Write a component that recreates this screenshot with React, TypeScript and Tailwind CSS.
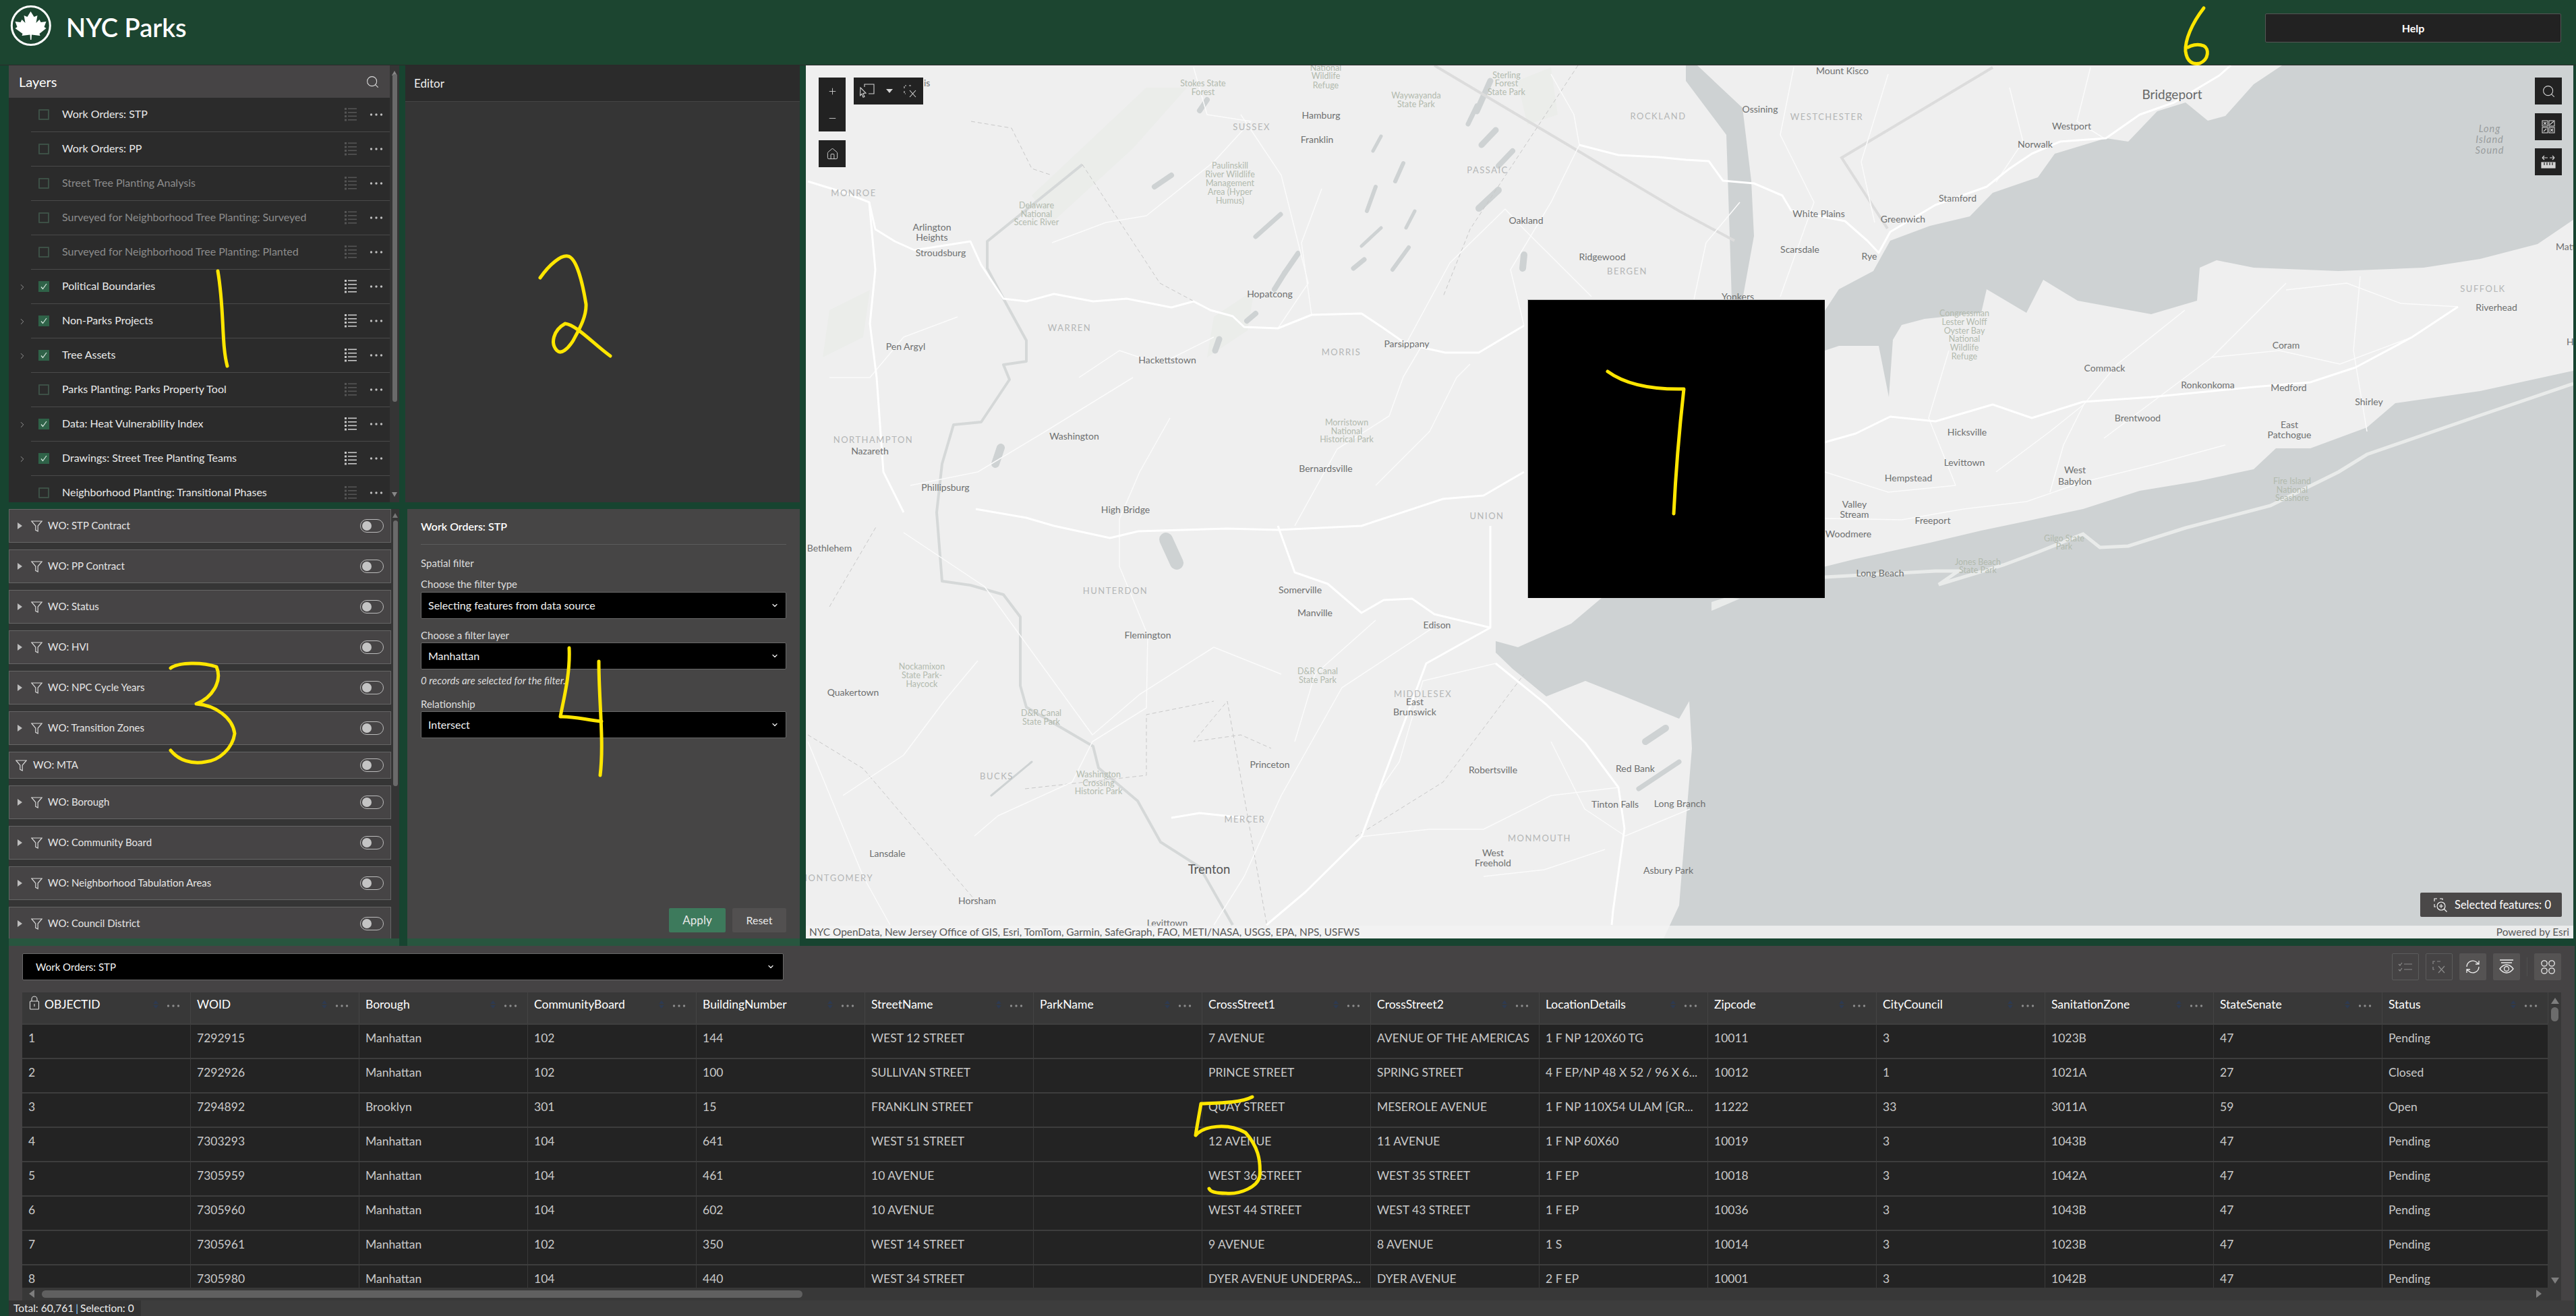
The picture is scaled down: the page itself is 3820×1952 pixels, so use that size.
import { ChevronDown, ChevronRight, Search, Home, Plus, Minus } from "lucide-react";

const sans = "font-[family-name:Lato,sans-serif]";

const layers = [
  { label: "Work Orders: STP", on: false, dim: false, open: false },
  { label: "Work Orders: PP", on: false, dim: false, open: false },
  { label: "Street Tree Planting Analysis", on: false, dim: true, open: false },
  { label: "Surveyed for Neighborhood Tree Planting: Surveyed", on: false, dim: true, open: false },
  { label: "Surveyed for Neighborhood Tree Planting: Planted", on: false, dim: true, open: false },
  { label: "Political Boundaries", on: true, dim: false, open: true },
  { label: "Non-Parks Projects", on: true, dim: false, open: true },
  { label: "Tree Assets", on: true, dim: false, open: true },
  { label: "Parks Planting: Parks Property Tool", on: false, dim: false, open: false },
  { label: "Data: Heat Vulnerability Index", on: true, dim: false, open: true },
  { label: "Drawings: Street Tree Planting Teams", on: true, dim: false, open: true },
  { label: "Neighborhood Planting: Transitional Phases", on: false, dim: false, open: false },
];

const filters = [
  "WO: STP Contract",
  "WO: PP Contract",
  "WO: Status",
  "WO: HVI",
  "WO: NPC Cycle Years",
  "WO: Transition Zones",
  "WO: MTA",
  "WO: Borough",
  "WO: Community Board",
  "WO: Neighborhood Tabulation Areas",
  "WO: Council District",
];

const columns = [
  "OBJECTID", "WOID", "Borough", "CommunityBoard", "BuildingNumber", "StreetName", "ParkName", "CrossStreet1",
  "CrossStreet2", "LocationDetails", "Zipcode", "CityCouncil", "SanitationZone", "StateSenate", "Status",
];

const rows = [
  ["1", "7292915", "Manhattan", "102", "144", "WEST 12 STREET", "", "7 AVENUE", "AVENUE OF THE AMERICAS", "1 F NP 120X60 TG", "10011", "3", "1023B", "47", "Pending"],
  ["2", "7292926", "Manhattan", "102", "100", "SULLIVAN STREET", "", "PRINCE STREET", "SPRING STREET", "4 F EP/NP 48 X 52 / 96 X 6...", "10012", "1", "1021A", "27", "Closed"],
  ["3", "7294892", "Brooklyn", "301", "15", "FRANKLIN STREET", "", "QUAY STREET", "MESEROLE AVENUE", "1 F NP 110X54 ULAM [GR...", "11222", "33", "3011A", "59", "Open"],
  ["4", "7303293", "Manhattan", "104", "641", "WEST 51 STREET", "", "12 AVENUE", "11 AVENUE", "1 F NP 60X60", "10019", "3", "1043B", "47", "Pending"],
  ["5", "7305959", "Manhattan", "104", "461", "10 AVENUE", "", "WEST 36 STREET", "WEST 35 STREET", "1 F EP", "10018", "3", "1042A", "47", "Pending"],
  ["6", "7305960", "Manhattan", "104", "602", "10 AVENUE", "", "WEST 44 STREET", "WEST 43 STREET", "1 F EP", "10036", "3", "1043B", "47", "Pending"],
  ["7", "7305961", "Manhattan", "102", "350", "WEST 14 STREET", "", "9 AVENUE", "8 AVENUE", "1 S", "10014", "3", "1023B", "47", "Pending"],
  ["8", "7305980", "Manhattan", "104", "440", "WEST 34 STREET", "", "DYER AVENUE UNDERPAS...", "DYER AVENUE", "2 F EP", "10001", "3", "1042B", "47", "Pending"],
];

// map labels, in page pixels
const cities: [string, number, number][] = [
  ["Hamburg", 1959, 171], ["Franklin", 1953, 207], ["Arlington", 1382, 337], ["Heights", 1382, 352], ["Stroudsburg", 1395, 375],
  ["Oakland", 2263, 327], ["Ridgewood", 2376, 381], ["Hopatcong", 1883, 436], ["Parsippany", 2086, 510], ["Pen Argyl", 1343, 514],
  ["Hackettstown", 1731, 534], ["Washington", 1593, 647], ["Nazareth", 1290, 669], ["Bernardsville", 1966, 695], ["Phillipsburg", 1402, 723],
  ["High Bridge", 1669, 756], ["Bethlehem", 1230, 813], ["Somerville", 1928, 875], ["Manville", 1950, 909], ["Edison", 2131, 927],
  ["Flemington", 1702, 942], ["Quakertown", 1265, 1027], ["East", 2098, 1041], ["Brunswick", 2098, 1056], ["Princeton", 1883, 1134],
  ["Robertsville", 2214, 1142], ["Red Bank", 2425, 1140], ["Tinton Falls", 2395, 1193], ["Long Branch", 2491, 1192], ["West", 2214, 1265],
  ["Freehold", 2214, 1280], ["Lansdale", 1316, 1266], ["Asbury Park", 2474, 1291], ["Horsham", 1449, 1336], ["Levittown", 1731, 1369],
  ["Mount Kisco", 2732, 105], ["Ossining", 2610, 162], ["Westport", 3072, 187], ["Norwalk", 3018, 214], ["Stamford", 2903, 294],
  ["White Plains", 2697, 317], ["Greenwich", 2822, 325], ["Scarsdale", 2669, 370], ["Rye", 2772, 380], ["Yonkers", 2577, 440],
  ["Riverhead", 3702, 456], ["Coram", 3390, 512], ["Commack", 3121, 546], ["Ronkonkoma", 3274, 571], ["Medford", 3394, 575],
  ["Shirley", 3513, 596], ["Brentwood", 3170, 620], ["East", 3395, 630], ["Patchogue", 3395, 645], ["Hicksville", 2917, 641],
  ["Levittown", 2913, 686], ["West", 3077, 697], ["Babylon", 3077, 714], ["Hempstead", 2830, 709], ["Valley", 2750, 748],
  ["Stream", 2750, 763], ["Freeport", 2866, 772], ["Woodmere", 2741, 792], ["Long Beach", 2788, 850],
];

const counties: [string, number, number][] = [
  ["SUSSEX", 1856, 188], ["ROCKLAND", 2459, 172], ["PASSAIC", 2206, 252], ["MONROE", 1266, 286], ["BERGEN", 2413, 402], ["WARREN", 1586, 486],
  ["MORRIS", 1989, 522], ["NORTHAMPTON", 1295, 652], ["UNION", 2205, 765], ["HUNTERDON", 1654, 876], ["MIDDLESEX", 2110, 1029], ["BUCKS", 1478, 1151],
  ["MERCER", 1846, 1215], ["MONMOUTH", 2283, 1243], ["MONTGOMERY", 1240, 1302], ["WESTCHESTER", 2709, 173], ["SUFFOLK", 3682, 428],
];

const parks: [string, number, number][] = [
  ["Stokes State", 1784, 124], ["Forest", 1784, 137], ["National", 1966, 101], ["Wildlife", 1966, 113], ["Refuge", 1966, 127],
  ["Waywayanda", 2100, 142], ["State Park", 2100, 155], ["Sterling", 2234, 112], ["Forest", 2234, 124], ["State Park", 2234, 137],
  ["Paulinskill", 1824, 246], ["River Wildlife", 1824, 259], ["Management", 1824, 272], ["Area (Hyper", 1824, 285], ["Humus)", 1824, 298],
  ["Delaware", 1537, 305], ["National", 1537, 318], ["Scenic River", 1537, 330], ["Morristown", 1997, 627], ["National", 1997, 640], ["Historical Park", 1997, 652],
  ["Nockamixon", 1367, 989], ["State Park-", 1367, 1002], ["Haycock", 1367, 1015], ["D&R Canal", 1954, 996], ["State Park", 1954, 1009],
  ["D&R Canal", 1544, 1058], ["State Park", 1544, 1071], ["Washington", 1629, 1149], ["Crossing", 1629, 1162], ["Historic Park", 1629, 1174],
  ["Congressman", 2913, 465], ["Lester Wolff", 2913, 478], ["Oyster Bay", 2913, 491], ["National", 2913, 503], ["Wildlife", 2913, 516], ["Refuge", 2913, 529],
  ["Fire Island", 3399, 714], ["National", 3399, 727], ["Seashore", 3399, 739], ["Gilgo State", 3061, 799], ["Park", 3061, 811], ["Jones Beach", 2933, 834], ["State Park", 2933, 846],
];

const bigRoads = [
  "1198,269 1250,285 1289,300 1298,340 1327,358 1356,371 1439,358 1455,393 1488,443 1522,447 1563,436 1621,447 1671,443 1737,456 1770,447 1795,460 1828,469 1845,485 1895,487 1945,467 2019,465 2052,487 2085,510 2143,523 2193,523 2260,483",
  "2342,215 2400,230 2459,233 2500,237 2534,239 2555,268 2601,272 2643,290 2656,312 2736,328 2769,357 2786,375 2803,344 2870,304 2946,277 2980,250 3013,228 3055,210 3123,205 3173,170 3224,152 3291,112 3308,97",
  "3645,455 3577,500 3493,545 3426,567 3342,574 3190,589 3089,596 3013,620 2955,600 2870,625 2803,618 2752,643 2706,656",
  "2210,780 2210,931 2115,984 2019,1241 1936,1323 1878,1372",
  "2218,984 2293,1045 2351,1102 2400,1168 2409,1229 2392,1351 2390,1372",
  "1447,755 1522,768 1563,780 1646,798 1688,788 1820,784 1895,786 2019,780 2140,740 2200,735 2260,700",
  "1895,780 1920,849 1969,866 2019,909 2052,890 2094,888 2127,911 2177,923 2210,931",
  "1737,1213 1779,1206 1845,1213",
  "1289,300 1298,400 1290,480 1300,560 1310,700 1340,760",
];

const thinRoads = [
  "2110,510 2081,559 2060,617 1983,666 1920,780",
  "2706,769 2820,771 2912,755 3005,744 3089,715 3190,690 3300,660",
  "1560,360 1640,330 1700,320 1800,240 1855,180 1790,170 1770,100",
  "1895,487 1940,420 1900,260 1840,170",
  "2260,483 2240,400 2300,300 2342,215 2334,170 2300,110",
  "2085,510 2150,390 2232,310 2260,340 2360,440",
  "1340,790 1460,870 1620,1090 1690,1030 1800,960 1900,1000",
  "1702,942 1700,1050 1620,1100 1590,1160 1480,1210 1445,1240",
  "2131,927 1990,1020 1900,1180 1845,1300 1800,1372",
  "2218,984 2110,1010 2075,1130 2040,1180",
  "2400,1168 2300,1180 2200,1230 2120,1230 2019,1241",
  "2506,1200 2410,1240 2350,1200 2300,1100",
  "1198,1100 1280,1300 1320,1372",
  "1735,620 1690,700 1660,770 1660,840 1702,942",
  "2706,700 2800,730 2900,720 2860,620 2890,520",
  "3240,460 3140,540 3090,600 3060,660 3040,730",
  "3390,420 3280,530 3200,590 3120,650",
  "3500,410 3490,520 3510,640",
  "2660,100 2640,200 2690,300 2640,440",
  "2800,110 2760,240 2780,330",
  "2980,130 3000,210 2960,270",
  "3100,100 3080,180 3120,205",
  "1600,560 1660,520 1720,540 1800,500",
  "1230,560 1290,560 1340,500 1420,470",
  "1350,720 1450,700 1550,640 1680,560",
  "1960,280 1930,360 1945,467",
  "2040,720 2120,640 2160,560 2180,540",
  "3645,455 3560,450 3480,420 3390,430",
  "3577,500 3470,540 3380,520 3280,530",
  "2960,700 3040,640 3090,600",
  "1250,1180 1340,1120 1400,1040 1450,980",
  "1920,1100 1950,1000 2040,920",
  "2200,1300 2290,1290 2380,1260",
  "2580,300 2530,360 2500,500",
];

const countyLines = [
  "1605,244 1720,420 1795,460",
  "2340,97 2180,340 2140,440",
  "1880,1380 1820,1040 1770,1100 1840,1090 1885,1110",
  "1520,1170 1700,1150 1700,1060 1800,1040",
  "1198,1090 1280,1140 1450,1340",
  "2010,1241 2140,1160 2260,1000",
  "1440,180 1500,190 1530,250 1560,260",
  "1230,900 1300,780",
];

const stateLines = ["2127,97 2490,313 2572,357", "2955,100 2731,234 2799,339"];

// small lakes, drawn as thick round strokes: x1, y1, x2, y2, width
const lakes: [number, number, number, number, number][] = [
  [1790, 148, 1779, 164, 8], [2190, 157, 2177, 184, 7], [2210, 120, 2190, 165, 9], [2218, 193, 2197, 215, 9], [2243, 224, 2222, 246, 8],
  [2222, 282, 2193, 309, 10], [2048, 202, 2036, 224, 5], [2081, 242, 2069, 269, 6], [2040, 277, 2027, 313, 6], [1899, 318, 1862, 351, 7],
  [2048, 338, 2019, 365, 5], [2089, 367, 2065, 400, 6], [2023, 385, 2007, 398, 7], [2260, 378, 2258, 398, 10], [2098, 313, 2085, 338, 5],
  [1925, 376, 1905, 405, 8], [1905, 405, 1890, 429, 8], [1862, 465, 1849, 476, 8], [1808, 503, 1802, 520, 9], [1484, 664, 1476, 688, 12],
  [1737, 260, 1712, 277, 8], [1729, 800, 1745, 835, 20], [2440, 1100, 2470, 1080, 10], [2430, 1170, 2490, 1130, 7], [1530, 1130, 1470, 1180, 3],
];

const forests = [
  "1560,330 1680,220 1760,130 1700,130 1530,290",
  "1230,460 1290,430 1280,500 1220,530",
  "1800,470 1860,430 1850,490 1790,530",
  "2250,120 2300,100 2310,170 2265,185",
];

// yellow hand drawn digits over the picture
const marks = [
  "M323 402 C333 460 328 509 337 543",
  "M801 412 C815 392 832 378 842 380 C855 382 864 420 869 451 C870 470 858 490 850 505 C842 518 832 526 826 520 C816 510 820 490 838 480 C855 482 880 510 905 528",
  "M253 991 C265 982 300 982 321 989 C330 1010 315 1035 291 1044 C320 1046 345 1065 348 1088 C345 1110 325 1128 305 1130 C285 1134 265 1128 253 1113",
  "M844 961 C846 1000 835 1040 831 1063 C850 1062 870 1068 892 1070",
  "M888 981 C888 1040 896 1100 890 1150",
  "M1857 1627 C1840 1636 1810 1636 1781 1637 C1778 1655 1775 1670 1773 1684 C1785 1670 1820 1665 1847 1680 C1865 1700 1870 1720 1868 1745 C1865 1760 1840 1772 1818 1770 C1805 1770 1795 1768 1793 1763",
  "M3268 12 C3250 35 3240 60 3241 76 C3243 92 3252 96 3262 94 C3276 88 3276 72 3268 68 C3258 64 3248 68 3245 70",
  "M2384 551 C2410 570 2450 578 2497 577 C2490 640 2485 700 2482 762",
];

function DotsIcon({ dim }: { dim?: boolean }) {
  return (
    <svg width="20" height="4" viewBox="0 0 20 4" className={dim ? "text-[#8c8c8c]" : "text-[#bdbdbd]"}>
      <circle cx="2.5" cy="2" r="1.7" fill="currentColor" />
      <circle cx="10" cy="2" r="1.7" fill="currentColor" />
      <circle cx="17.5" cy="2" r="1.7" fill="currentColor" />
    </svg>
  );
}

function LegendIcon({ dim }: { dim: boolean }) {
  return (
    <svg width="18" height="20" viewBox="0 0 18 20" className={dim ? "text-[#555555]" : "text-[#c8c8c8]"} fill="currentColor">
      <rect x="0" y="0" width="3" height="3" />
      <rect x="5" y="0.5" width="13" height="1.6" />
      <rect x="0" y="5.5" width="3" height="3" />
      <rect x="5" y="6" width="13" height="1.6" />
      <rect x="0" y="11" width="3" height="3" />
      <rect x="5" y="11.5" width="13" height="1.6" />
      <rect x="0" y="16.5" width="3" height="3" />
      <rect x="5" y="17" width="13" height="1.6" />
    </svg>
  );
}

function Funnel() {
  return (
    <svg width="17" height="17" viewBox="0 0 17 17" fill="none" stroke="#d8d8d8" strokeWidth="1.2" className="shrink-0">
      <path d="M0.8 1h15.4L10.2 8v8l-3.4-1.6V8z" />
    </svg>
  );
}

function Toggle() {
  return (
    <div className="flex items-center w-[35px] h-[20px] rounded-full border border-[#bdbdbd] pl-[2px]">
      <div className="w-[14px] h-[14px] rounded-full bg-[#c4c4c4]" />
    </div>
  );
}

function Select({ label, w, small }: { label: string; w: string; small?: boolean }) {
  return (
    <div className={`flex items-center justify-between bg-black border border-[#6a6a6a] rounded-[2px] h-[40px] ${w} ${small ? "pl-[19px] pr-[12px] text-[15px]" : "pl-[10px] pr-[10px] text-[16px]"} text-[#f2f2f2]`}>
      <span>{label}</span>
      <ChevronDown size={12} strokeWidth={2.6} className="text-[#eeeeee]" />
    </div>
  );
}

function ToolButton({ disabled, children }: { disabled?: boolean; children: React.ReactNode }) {
  return (
    <div className={`flex items-center justify-center w-[40px] h-[40px] rounded-[2px] ${disabled ? "border border-[#5c5c5c]" : "bg-[#555353]"}`}>
      {children}
    </div>
  );
}

function MapButton({ children, className }: { children: React.ReactNode; className?: string }) {
  return <div className={`flex items-center justify-center bg-[#222222] w-[40px] h-[40px] text-[#d4d4d4] ${className ?? ""}`}>{children}</div>;
}

function MapCanvas() {
  return (
    <svg viewBox="1195 97 2621 1295" className={`w-full h-full block bg-[#efefef] ${sans}`}>
      {forests.map((p, i) => (
        <polygon key={i} points={p} fill="#ebedea" />
      ))}
      {/* sound */}
      <polygon
        fill="#ced2d3"
        points="3384,97 3342,125 3300,172 3274,179 3241,152 3199,165 3156,210 3123,205 3047,228 3022,263 2955,286 2921,321 2862,335 2803,357 2778,402 2727,429 2700,470 2700,522 2727,513 2786,513 2801,589 2807,504 2820,482 2854,473 2938,464 2946,429 3005,464 3030,415 3081,446 3190,466 3258,446 3262,397 3287,386 3342,397 3468,402 3594,397 3678,384 3763,362 3816,326 3816,97"
      />
      {/* ocean and bays */}
      <polygon
        fill="#ced2d3"
        points="3816,550 3678,580 3552,598 3510,634 3426,665 3375,665 3342,696 3258,714 3173,728 3089,755 3005,773 2938,787 2862,805 2752,829 2700,842 2700,887 2375,887 2330,925 2251,960 2218,951 2218,968 2243,992 2293,1033 2351,1010 2409,1033 2490,1066 2505,1040 2509,1110 2500,1219 2490,1343 2467,1392 3816,1392"
      />
      <polyline
        fill="none"
        stroke="#e9ebea"
        strokeWidth="5"
        points="3816,569 3678,616 3510,674 3468,700 3367,750 3241,783 3156,810 3114,812 3089,792 3022,819 2971,838 2875,867 2904,847 2870,847 2706,856"
      />
      <polygon fill="#e9ebea" points="2538,906 2580,888 2560,886 2538,893" />
      <polygon fill="#ced2d3" points="2517,97 2584,160 2597,268 2601,350 2584,444 2568,444 2565,350 2560,200 2500,120 2500,97" />
      <polyline fill="none" stroke="#d5d8d8" strokeWidth="4" strokeLinejoin="round" points="1605,244 1464,358 1464,398 1488,443 1522,505 1522,536 1488,541 1497,563 1455,626 1414,630 1397,688 1389,760 1397,862 1439,868 1488,882 1513,915 1513,1017 1522,1049 1621,1107 1629,1139 1687,1188 1721,1249 1779,1286 1828,1372" />
      {lakes.map(([x1, y1, x2, y2, w], i) => (
        <line key={i} x1={x1} y1={y1} x2={x2} y2={y2} stroke="#ced2d3" strokeWidth={w} strokeLinecap="round" />
      ))}
      {stateLines.map((p, i) => (
        <polyline key={i} points={p} fill="none" stroke="#dcdcdc" strokeWidth="4" />
      ))}
      {countyLines.map((p, i) => (
        <polyline key={i} points={p} fill="none" stroke="#c8c8c8" strokeWidth="1" strokeDasharray="6 4" />
      ))}
      {thinRoads.map((p, i) => (
        <polyline key={i} points={p} fill="none" stroke="#fbfbfb" strokeWidth="1.5" strokeLinejoin="round" />
      ))}
      {bigRoads.map((p, i) => (
        <polyline key={i} points={p} fill="none" stroke="#ffffff" strokeWidth="3" strokeLinejoin="round" />
      ))}
      {counties.map(([t, x, y], i) => (
        <text key={i} x={x} y={y + 5} textAnchor="middle" fontSize="13" letterSpacing="1.5" fill="#b4b6b6">{t}</text>
      ))}
      {parks.map(([t, x, y], i) => (
        <text key={i} x={x} y={y + 4} textAnchor="middle" fontSize="12.5" fill="#b2baae">{t}</text>
      ))}
      {cities.map(([t, x, y], i) => (
        <text key={i} x={x} y={y + 5} textAnchor="middle" fontSize="14" fill="#6e7070">{t}</text>
      ))}
      <text x="1370" y="128" fontSize="14" fill="#6e7070">is</text>
      <text x="3790" y="371" fontSize="14" fill="#6e7070">Mattituck</text>
      <text x="3806" y="512" fontSize="14" fill="#6e7070">Hampton</text>
      <text x="3221" y="147" textAnchor="middle" fontSize="19" fill="#666868">Bridgeport</text>
      <text x="1793" y="1296" textAnchor="middle" fontSize="18.5" fill="#555757">Trenton</text>
      <g fontSize="14.5" fontStyle="italic" letterSpacing="1" fill="#999d9e" textAnchor="middle">
        <text x="3692" y="196">Long</text>
        <text x="3692" y="212">Island</text>
        <text x="3692" y="228">Sound</text>
      </g>
    </svg>
  );
}

export default function App() {
  return (
    <div className={`relative w-[3820px] h-[1952px] overflow-hidden bg-[#174430] ${sans}`}>
      {/* header */}
      <div className="flex items-center justify-between h-[97px] bg-[#1c4530] border-b border-[#2a2a2a] pr-[22px] pl-[15px]">
        <div className="flex items-center -mt-[20px] gap-[22px]">
          <svg width="61" height="62" viewBox="15 7 60 62">
            <circle cx="45.3" cy="38" r="28.5" fill="none" stroke="#ffffff" strokeWidth="3" />
            <path
              fill="#ffffff"
              d="M45 17 L50 25 L55 23 L53 34 L58 29 L60 33 L68 32 L65 40 L68 42 L58 50 L59 53 L46.5 51.5 L46 59 L44.5 59 L44 51.5 L32 53 L33 50 L22 42 L25 40 L22 32 L30 33 L32 29 L37 34 L35 23 L40 25 Z"
            />
          </svg>
          <span className="mt-[3px] text-[38px] font-semibold text-white leading-none">NYC Parks</span>
        </div>
        <div className="flex items-center justify-center -mt-[13px] w-[439px] h-[43px] bg-[#222222] border border-[#555555] rounded-[2px] text-white font-bold text-[16px]">
          Help
        </div>
      </div>

      {/* panels and map */}
      <div className="flex h-[1306px] pl-[13px]">
        <div className="flex flex-col w-[579px]">
          {/* layers */}
          <div className="flex h-[648px]">
            <div className="flex flex-col w-[565px] bg-[#2b2b2b] overflow-hidden">
              <div className="flex items-center justify-between shrink-0 h-[48px] bg-[#464445] pl-[15px] pr-[15px] text-white text-[20px]">
                <span>Layers</span>
                <Search size={21} strokeWidth={1.2} className="text-[#dddddd]" />
              </div>
              {layers.map((l) => (
                <div key={l.label} className="flex items-center shrink-0 h-[51px]">
                  <div className="flex justify-center w-[33px] pl-[6px] text-[#aaaaaa]">
                    {l.open && <ChevronRight size={14} strokeWidth={1.4} />}
                  </div>
                  <div className="flex flex-1 items-center self-stretch border-b border-[#4a4a4a] pl-[11px]">
                    {l.on ? (
                      <div className="flex items-center justify-center w-[16px] h-[16px] bg-[#2f6248] text-[#d8e8df]">
                        <svg width="12" height="12" viewBox="0 0 12 12" fill="none" stroke="currentColor" strokeWidth="1.2">
                          <path d="M2 6.5l2.5 3L10 2" />
                        </svg>
                      </div>
                    ) : (
                      <div className="w-[16px] h-[16px] border-2 border-[#3d5046] rounded-[1px]" />
                    )}
                    <span className={`flex-1 pl-[19px] text-[16px] leading-none -mt-[3px] ${l.dim ? "text-[#8c8c8c]" : "text-[#e9e9e9]"}`}>{l.label}</span>
                    <LegendIcon dim={!l.on} />
                    <div className="ml-[19px] mr-[10px]">
                      <DotsIcon />
                    </div>
                  </div>
                </div>
              ))}
            </div>
            <div className="flex flex-col items-center justify-between flex-1 bg-[#353535] py-[8px]">
              <div className="w-0 h-0 border-x-[4px] border-x-transparent border-b-[7px] border-b-[#888888]" />
              <div className="w-[7px] h-[486px] -mt-[2px] mb-auto rounded-full bg-[#6a6a6a]" />
              <div className="w-0 h-0 border-x-[4px] border-x-transparent border-t-[7px] border-t-[#888888]" />
            </div>
          </div>
          <div className="h-[10px] shrink-0" />
          {/* data filters */}
          <div className="flex h-[637px]">
            <div className="flex flex-col gap-[10px] w-[567px] bg-[#353535] overflow-hidden">
              {filters.map((f) => (
                <div
                  key={f}
                  className={`flex items-center shrink-0 bg-[#464445] border border-[#666666] pr-[10px] text-[#e6e6e6] text-[15px] ${f === "WO: MTA" ? "h-[40px]" : "h-[50px]"}`}
                >
                  {f === "WO: MTA" ? (
                    <div className="pl-[9px] pr-[9px]">
                      <Funnel />
                    </div>
                  ) : (
                    <>
                      <div className="ml-[12px] mr-[13px] w-0 h-0 border-y-[5px] border-y-transparent border-l-[7px] border-l-[#bdbdbd]" />
                      <Funnel />
                      <div className="w-[8px]" />
                    </>
                  )}
                  <span className="flex-1 -mt-[2px]">{f}</span>
                  <Toggle />
                </div>
              ))}
            </div>
            <div className="flex flex-col items-center flex-1 bg-[#353535] pt-[6px]">
              <div className="w-0 h-0 border-x-[4px] border-x-transparent border-b-[7px] border-b-[#777777]" />
              <div className="w-[7px] h-[394px] mt-[4px] rounded-full bg-[#6a6a6a]" />
            </div>
          </div>
          <div className="h-[11px] shrink-0 bg-[#28563f]" />
        </div>

        <div className="flex flex-col w-[585px] ml-[9px]">
          {/* editor */}
          <div className="flex flex-col h-[648px] bg-[#353535]">
            <div className="flex items-center h-[54px] bg-[#2b2b2b] border-b border-[#444444] pl-[13px] text-[17px] text-[#eeeeee]">Editor</div>
          </div>
          <div className="h-[10px] shrink-0" />
          {/* spatial filter */}
          <div className="flex flex-col h-[637px] ml-[3px] bg-[#464545] px-[20px] text-[#dfdfdf] text-[15px]">
            <div className="flex items-center h-[53px] mb-[16px] border-b border-[#5c5c5c] text-[16px] font-semibold text-white">Work Orders: STP</div>
            <div className="leading-[22px]">Spatial filter</div>
            <div className="mt-[9px] leading-[22px]">Choose the filter type</div>
            <div className="mt-[1px]">
              <Select label="Selecting features from data source" w="w-full" />
            </div>
            <div className="mt-[13px] leading-[22px]">Choose a filter layer</div>
            <div>
              <Select label="Manhattan" w="w-full" />
            </div>
            <div className="mt-[5px] leading-[22px] italic">0 records are selected for the filter.</div>
            <div className="mt-[13px] leading-[22px]">Relationship</div>
            <div>
              <Select label="Intersect" w="w-full" />
            </div>
            <div className="flex justify-end gap-[10px] mt-auto mb-[9px]">
              <div className="flex items-center justify-center w-[84px] h-[36px] rounded-[2px] bg-[#3d7a5c] text-[#e8e8e8] text-[17px]">Apply</div>
              <div className="flex items-center justify-center w-[80px] h-[36px] rounded-[2px] bg-[#525050] text-[#e8e8e8] text-[16px]">Reset</div>
            </div>
          </div>
          <div className="h-[11px] shrink-0 ml-[3px] bg-[#28563f]" />
        </div>

        {/* map */}
        <div className="relative w-[2621px] h-[1295px] ml-[9px] overflow-hidden">
          <MapCanvas />
          <div className="absolute left-[19px] top-[18px] flex flex-col w-[40px] h-[80px] bg-[#222222] text-[#d4d4d4]">
            <div className="flex items-center justify-center h-[40px]">
              <Plus size={15} strokeWidth={1.4} />
            </div>
            <div className="flex items-center justify-center h-[40px]">
              <Minus size={15} strokeWidth={1.4} />
            </div>
          </div>
          <MapButton className="absolute left-[19px] top-[111px]">
            <Home size={19} strokeWidth={1.2} />
          </MapButton>
          <div className="absolute left-[71px] top-[18px] flex items-center justify-between w-[103px] h-[40px] bg-[#222222] px-[9px] text-[#d4d4d4]">
            <svg width="22" height="22" viewBox="0 0 22 22" fill="none" stroke="currentColor" strokeWidth="1.1">
              <path d="M7 5V1h14v14h-8" />
              <path d="M1 6l8 8-4 .5 2 5-2 .8-2-5-2.5 2.5z" />
            </svg>
            <div className="w-0 h-0 border-x-[5px] border-x-transparent border-t-[6px] border-t-[#d4d4d4]" />
            <svg width="20" height="20" viewBox="0 0 20 20" fill="none" stroke="currentColor" strokeWidth="1.1">
              <path d="M1 6V2h3M8 2h5M1 10v4h2" strokeDasharray="3 2" />
              <path d="M9 9l9 10M18 9L9 19" />
            </svg>
          </div>
          <MapButton className="absolute right-[17px] top-[18px]">
            <Search size={21} strokeWidth={1.2} />
          </MapButton>
          <MapButton className="absolute right-[17px] top-[71px]">
            <svg width="20" height="20" viewBox="0 0 20 20" fill="none" stroke="currentColor" strokeWidth="1.1">
              <rect x="1" y="1" width="8" height="8" />
              <rect x="11" y="1" width="8" height="8" />
              <rect x="1" y="11" width="8" height="8" />
              <rect x="11" y="11" width="8" height="8" />
              <path d="M3 3l4 4M7 3l-4 4M12 7l6-5M3 17l4-4M13 13l4 4M17 13l-4 4" />
            </svg>
          </MapButton>
          <MapButton className="absolute right-[17px] top-[123px]">
            <svg width="22" height="22" viewBox="0 0 22 22" fill="none" stroke="currentColor" strokeWidth="1.2">
              <path d="M2 5h8M2 5l3-3M2 5l3 3M20 5h-7M20 5l-3-3M20 5l-3 3" />
              <rect x="1" y="12" width="20" height="8" fill="currentColor" />
              <path d="M5 12v4M9 12v4M13 12v4M17 12v4" stroke="#222222" />
            </svg>
          </MapButton>
          <div className="absolute right-[17px] top-[1227px] flex items-center w-[210px] h-[36px] rounded-[2px] bg-[#4a4848] pl-[20px] text-white text-[16.5px] gap-[11px]">
            <svg width="20" height="22" viewBox="0 0 20 22" fill="none" stroke="currentColor" strokeWidth="1.1">
              <path d="M1 6V2h4M9 2h4v2M1 10v4h2" />
              <circle cx="11" cy="13" r="6" />
              <path d="M11 10v6M8 13h6M15.5 17.5l4 4" />
            </svg>
            <span>Selected features: 0</span>
          </div>
          <div className="absolute left-0 right-0 bottom-0 flex items-center justify-between h-[19px] bg-[#f2f3f3]/80 pl-[5px] pr-[6px] text-[15.4px] text-[#5a5a5a]">
            <span>NYC OpenData, New Jersey Office of GIS, Esri, TomTom, Garmin, SafeGraph, FAO, METI/NASA, USGS, EPA, NPS, USFWS</span>
            <span>Powered by Esri</span>
          </div>
        </div>
      </div>

      {/* table */}
      <div className="flex flex-col h-[549px] ml-[13px] mr-[2px] bg-[#454344]">
        <div className="flex items-center justify-between h-[70px] pl-[20px] pr-[20px] pt-[1px] pb-[8px]">
          <Select label="Work Orders: STP" w="w-[1129px]" small />
          <div className="flex items-center gap-[10px]">
            <ToolButton disabled>
              <svg width="22" height="18" viewBox="0 0 22 18" fill="none" stroke="#8a8a8a" strokeWidth="1.2">
                <path d="M1 5l2 2 3-4M9 5h12M1 13l2 2 3-4M9 13h12" />
              </svg>
            </ToolButton>
            <ToolButton disabled>
              <svg width="20" height="20" viewBox="0 0 20 20" fill="none" stroke="#8a8a8a" strokeWidth="1.2">
                <path d="M1 6V2h3M7 2h5M1 10v4h2" />
                <path d="M9 9l9 10M18 9L9 19" />
              </svg>
            </ToolButton>
            <ToolButton>
              <svg width="22" height="22" viewBox="0 0 22 22" fill="none" stroke="#ededed" strokeWidth="1.3">
                <path d="M2 11a9 9 0 0 1 15-6.5L20 7M20 2v5h-5M20 11a9 9 0 0 1-15 6.5L2 15M2 20v-5h5" />
              </svg>
            </ToolButton>
            <ToolButton>
              <svg width="22" height="22" viewBox="0 0 22 22" fill="none" stroke="#ededed" strokeWidth="1.3">
                <path d="M1 1h20M3 5h16M1 14c3-4 7-6 10-6s7 2 10 6c-3 4-7 6-10 6s-7-2-10-6z" />
                <circle cx="11" cy="14" r="3.5" />
              </svg>
            </ToolButton>
            <div className="w-px h-[28px] bg-[#505050]" />
            <ToolButton>
              <svg width="22" height="22" viewBox="0 0 22 22" fill="none" stroke="#ededed" strokeWidth="1.3">
                <circle cx="6" cy="6" r="4.2" />
                <circle cx="17" cy="6" r="4.2" />
                <circle cx="6" cy="17" r="4.2" />
                <circle cx="17" cy="17" r="4.2" />
              </svg>
            </ToolButton>
          </div>
        </div>

        <div className="flex h-[438px] ml-[20px]">
          <div className="w-[3746px] overflow-hidden bg-[#232323]">
            <div className="grid grid-cols-[repeat(14,250px)_246px] h-[48px] bg-[#383838] border-b-2 border-[#3f3f3f]">
              {columns.map((c, i) => (
                <div key={c} className="flex items-start pl-[9px] pt-[7px] border-r border-[#444444] text-[17.5px] text-white">
                  {i === 0 && (
                    <svg width="18" height="22" viewBox="0 0 16 22" fill="none" stroke="#dddddd" strokeWidth="1.1" className="mr-[6px] -mt-[2px]">
                      <rect x="1.5" y="8" width="13" height="12" rx="1" />
                      <path d="M4 8V5a4 4 0 0 1 8 0v3M8 12v4" />
                    </svg>
                  )}
                  <span className="flex-1 leading-[22px]">{c}</span>
                  <div className="flex flex-col gap-[2px] mt-[5px] mr-[12px]">
                    <div className="w-0 h-0 border-x-[4px] border-x-transparent border-b-[5px] border-b-[#2d3a50]" />
                    <div className="w-0 h-0 border-x-[4px] border-x-transparent border-t-[5px] border-t-[#2d3a50]" />
                  </div>
                  <div className="mt-[11px] mr-[15px]">
                    <DotsIcon dim />
                  </div>
                </div>
              ))}
            </div>
            {rows.map((r) => (
              <div key={r[0]} className="grid grid-cols-[repeat(14,250px)_246px] h-[51px] border-b-2 border-[#3d3d3d]">
                {r.map((v, i) => (
                  <div key={i} className="pl-[9px] pt-[9px] leading-[22px] border-r border-[#3a3a3a] text-[17.5px] text-[#c9c9c9] whitespace-nowrap overflow-hidden">
                    {v}
                  </div>
                ))}
              </div>
            ))}
          </div>
          <div className="flex flex-col items-center justify-between w-[19px] bg-[#383838] pt-[8px] pb-[6px]">
            <div className="w-0 h-0 border-x-[6px] border-x-transparent border-b-[9px] border-b-[#7e7e7e]" />
            <div className="w-[11px] h-[21px] mb-auto mt-[5px] rounded-full bg-[#6c6c6c]" />
            <div className="w-0 h-0 border-x-[6px] border-x-transparent border-t-[9px] border-t-[#7e7e7e]" />
          </div>
        </div>

        <div className="flex items-center h-[19px] ml-[20px] w-[3765px] bg-[#383838]">
          <div className="ml-[10px] w-0 h-0 border-y-[6px] border-y-transparent border-r-[8px] border-r-[#7e7e7e]" />
          <div className="ml-[11px] w-[1128px] h-[11px] rounded-full bg-[#606060]" />
          <div className="ml-auto mr-[29px] w-0 h-0 border-y-[6px] border-y-transparent border-l-[8px] border-l-[#7e7e7e]" />
        </div>

        <div className="flex-1 bg-[#3d3d3d]">
          <div className="flex items-center w-[196px] h-full pl-[7px] bg-[#333333] text-[15.5px] text-[#eeeeee]">
            Total: 60,761 <span className="mx-[3px] text-[#8fd0ff]">|</span> Selection: 0
          </div>
        </div>
      </div>

      {/* black box and handwritten numbers over the screenshot */}
      <div className="absolute left-[2265px] top-[444px] w-[441px] h-[443px] bg-black border-t border-l border-[#bdbdbd]" />
      <svg width="3820" height="1952" viewBox="0 0 3820 1952" className="absolute left-0 top-0 pointer-events-none" fill="none" stroke="#ffe600" strokeWidth="5" strokeLinecap="round" strokeLinejoin="round">
        {marks.map((d) => (
          <path key={d} d={d} />
        ))}
      </svg>
    </div>
  );
}
